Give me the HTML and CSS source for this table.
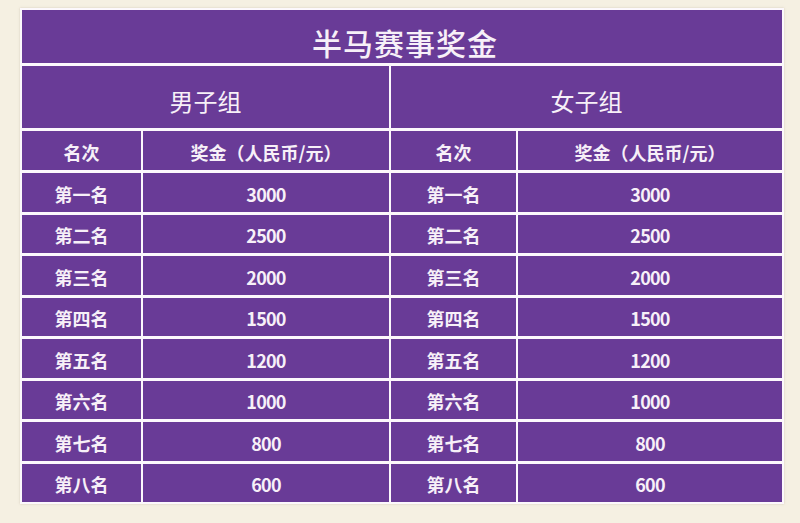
FILE: index.html
```html
<!DOCTYPE html>
<html lang="zh">
<head>
<meta charset="utf-8">
<title>半马赛事奖金</title>
<link rel="stylesheet" href="styles.css">
</head>
<body>
<div class="board">
  <div class="cell title">半马赛事奖金</div>
  <div class="cell group g-left">男子组</div>
  <div class="cell group">女子组</div>
  <div class="cell head">名次</div>
  <div class="cell head">奖金（人民币/元）</div>
  <div class="cell head">名次</div>
  <div class="cell head">奖金（人民币/元）</div>

  <div class="cell rank">第一名</div><div class="cell num">3000</div><div class="cell rank">第一名</div><div class="cell num">3000</div>
  <div class="cell rank">第二名</div><div class="cell num">2500</div><div class="cell rank">第二名</div><div class="cell num">2500</div>
  <div class="cell rank">第三名</div><div class="cell num">2000</div><div class="cell rank">第三名</div><div class="cell num">2000</div>
  <div class="cell rank">第四名</div><div class="cell num">1500</div><div class="cell rank">第四名</div><div class="cell num">1500</div>
  <div class="cell rank">第五名</div><div class="cell num">1200</div><div class="cell rank">第五名</div><div class="cell num">1200</div>
  <div class="cell rank">第六名</div><div class="cell num">1000</div><div class="cell rank">第六名</div><div class="cell num">1000</div>
  <div class="cell rank">第七名</div><div class="cell num">800</div><div class="cell rank">第七名</div><div class="cell num">800</div>
  <div class="cell rank">第八名</div><div class="cell num">600</div><div class="cell rank">第八名</div><div class="cell num">600</div>
</div>
</body>
</html>
```
FILE: styles.css
```css
html, body {
  margin: 0;
  padding: 0;
  background: #f5f0e2;
}
body {
  width: 800px;
  height: 523px;
  overflow: hidden;
  font-family: "Noto Sans CJK SC", "Noto Sans", sans-serif;
}
.board {
  margin: 8px 0 0 20px;
  width: 764px;
  box-sizing: border-box;
  padding: 2px;
  background: #fcf8fc;
  box-shadow: 0 0 2px rgba(180, 170, 150, 0.5);
  display: grid;
  grid-template-columns: 119px 246px 125px 264px;
  grid-template-rows: 53px 62px 39px repeat(8, 38.5px);
  column-gap: 2px;
  row-gap: 3px;
}
.cell {
  background: #693b97;
  color: #f7f0f8;
  display: flex;
  align-items: center;
  justify-content: center;
  line-height: 1;
}
.title {
  grid-column: 1 / 5;
  font-size: 30px;
  font-weight: 500;
  padding-top: 10px;
  padding-left: 6px;
  letter-spacing: 1px;
}
.group {
  grid-column: span 2;
  font-size: 24px;
  font-weight: 400;
  padding-top: 7px;
}
.head {
  font-size: 18px;
  font-weight: 700;
  padding-top: 2px;
}
.rank {
  font-size: 18px;
  font-weight: 700;
  padding-top: 3px;
}
.num {
  font-size: 18px;
  font-weight: 700;
  padding-top: 3px;
  letter-spacing: -0.8px;
}
```
